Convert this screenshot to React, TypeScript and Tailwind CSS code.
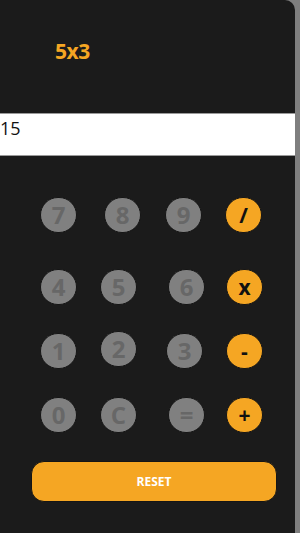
import React, { useState } from 'react';

type Key = { label: string; op?: boolean; cls: string };

// each row's keys; the margins follow the slightly uneven spacing of the picture
const rows: { top: string; keys: Key[] }[] = [
  {
    top: 'mt-[41px]',
    keys: [
      { label: '7', cls: 'ml-[40px]' },
      { label: '8', cls: 'ml-[27px]' },
      { label: '9', cls: 'ml-[24px]' },
      { label: '/', op: true, cls: 'ml-[23px]' },
    ],
  },
  {
    top: 'mt-[36px]',
    keys: [
      { label: '4', cls: 'ml-[40px]' },
      { label: '5', cls: 'ml-[23px]' },
      { label: '6', cls: 'ml-[31px]' },
      { label: 'x', op: true, cls: 'ml-[21px]' },
    ],
  },
  {
    top: 'mt-[28px]',
    keys: [
      { label: '1', cls: 'ml-[40px]' },
      { label: '2', cls: 'ml-[23px] -translate-y-[2px]' },
      { label: '3', cls: 'ml-[29px]' },
      { label: '-', op: true, cls: 'ml-[23px]' },
    ],
  },
  {
    top: 'mt-[28px]',
    keys: [
      { label: '0', cls: 'ml-[40px]' },
      { label: 'C', cls: 'ml-[23px]' },
      { label: '=', cls: 'ml-[31px]' },
      { label: '+', op: true, cls: 'ml-[21px]' },
    ],
  },
];

const App: React.FC = () => {
  const [value] = useState('15');

  return (
    <div className="min-h-[533px] bg-[#7f7f7f] font-['Open_Sans',sans-serif]">
      <div className="w-[295px] min-h-[533px] bg-[#1b1b1b] rounded-tr-[10px] overflow-hidden">
        <div className="h-[113px] pl-[55px] pt-[36px]">
          <span className="text-[21px] font-bold text-[#f5a623] tracking-[-0.5px]">5x3</span>
        </div>

        <div className="h-[43px] bg-white border-y border-[#9a9a9a] flex items-start">
          <span className="text-[18px] text-[#111] leading-none pt-[5px]">{value}</span>
        </div>

        {rows.map((row, i) => (
          <div key={i} className={`flex ${row.top}`}>
            {row.keys.map((k) => (
              <button
                key={k.label}
                className={`w-[37px] h-[36px] shrink-0 rounded-full border border-[#151515] flex items-center justify-center font-bold leading-none ${k.cls} ${
                  k.op ? 'bg-[#f5a623] text-[#111] text-[21px]' : 'bg-[#808080] text-[#676767] text-[24px]'
                }`}
              >
                {k.label}
              </button>
            ))}
          </div>
        ))}

        <div className="mt-[28px] pl-[31px]">
          <button className="w-[246px] h-[41px] rounded-[13px] bg-[#f5a623] border border-[#151515] text-white text-[12px] font-bold">
            RESET
          </button>
        </div>
      </div>
    </div>
  );
};

export default App;
